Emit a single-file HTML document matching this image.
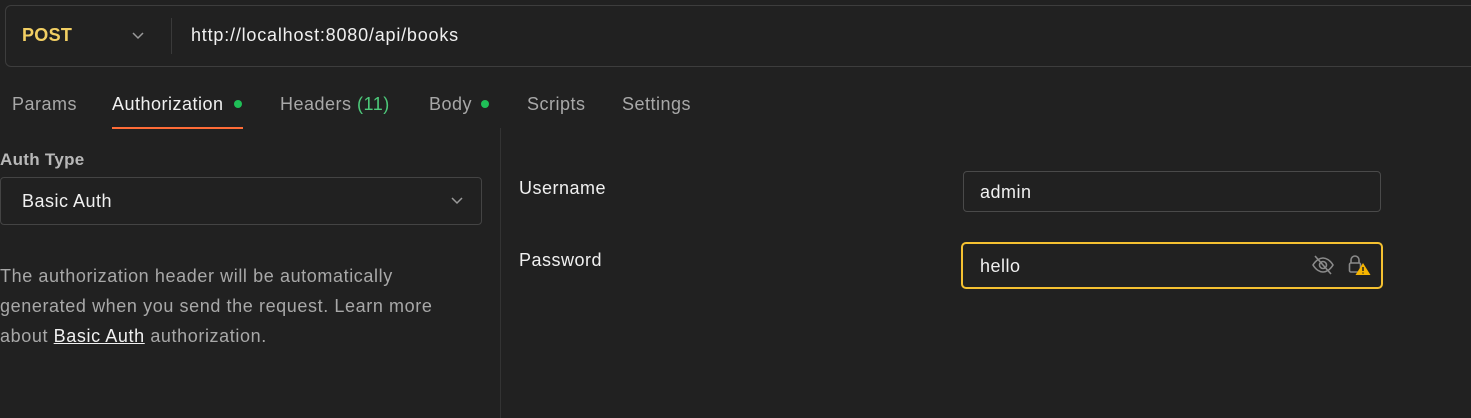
<!DOCTYPE html>
<html><head><style>
*{box-sizing:border-box;margin:0;padding:0}
body{width:1471px;height:414px;background:#212121;font-family:"Liberation Sans",sans-serif;color:#e8e8e8;position:relative;overflow:hidden;font-size:18px;letter-spacing:0.5px}
.a{position:absolute;white-space:nowrap}
</style></head><body>
<div class="a" style="left:5px;top:5px;width:1480px;height:62px;border:1px solid #3d3d3d;border-radius:6px"></div>
<div class="a" style="left:22px;top:25px;font-weight:bold;color:#f2cf63;font-size:18px;letter-spacing:0.3px">POST</div>
<svg class="a" style="left:131px;top:31px" width="14" height="10"><path d="M2 2l5 5 5-5" stroke="#9a9a9a" stroke-width="1.5" fill="none"/></svg>
<div class="a" style="left:171px;top:18px;width:1px;height:36px;background:#3a3a3a"></div>
<div class="a" style="left:191px;top:25px;color:#f0f0f0;letter-spacing:0.8px">http://localhost:8080/api/books</div>

<div class="a" style="left:12px;top:94px;color:#a8a8a8">Params</div>
<div class="a" style="left:112px;top:94px;color:#f0f0f0">Authorization</div>
<div class="a" style="left:234px;top:100px;width:8px;height:8px;border-radius:50%;background:#1fbf57"></div>
<div class="a" style="left:112px;top:127px;width:131px;height:2px;background:#ff6c37"></div>
<div class="a" style="left:280px;top:94px;color:#a8a8a8">Headers <span style="color:#4dc97a">(11)</span></div>
<div class="a" style="left:429px;top:94px;color:#a8a8a8">Body</div>
<div class="a" style="left:481px;top:100px;width:8px;height:8px;border-radius:50%;background:#1fbf57"></div>
<div class="a" style="left:527px;top:94px;color:#a8a8a8">Scripts</div>
<div class="a" style="left:622px;top:94px;color:#a8a8a8">Settings</div>

<div class="a" style="left:500px;top:128px;width:1px;height:290px;background:#333"></div>

<div class="a" style="left:0px;top:150px;font-weight:bold;color:#b8b8b8;font-size:17px;letter-spacing:0.3px">Auth Type</div>
<div class="a" style="left:0px;top:177px;width:482px;height:48px;border:1px solid #444;border-radius:4px"></div>
<div class="a" style="left:22px;top:191px;color:#f0f0f0">Basic Auth</div>
<svg class="a" style="left:450px;top:196px" width="14" height="10"><path d="M2 2l5 5 5-5" stroke="#9a9a9a" stroke-width="1.5" fill="none"/></svg>
<div class="a" style="left:0px;top:261px;width:440px;color:#a8a8a8;line-height:30px;white-space:normal;letter-spacing:0.6px">The authorization header will be automatically generated when you send the request. Learn more about <span style="color:#f0f0f0;text-decoration:underline">Basic Auth</span> authorization.</div>

<div class="a" style="left:519px;top:178px;color:#f0f0f0">Username</div>
<div class="a" style="left:963px;top:171px;width:418px;height:41px;border:1px solid #4a4a4a;border-radius:4px"></div>
<div class="a" style="left:980px;top:182px;color:#f0f0f0">admin</div>
<div class="a" style="left:519px;top:250px;color:#f0f0f0">Password</div>
<div class="a" style="left:961px;top:242px;width:422px;height:47px;border:2px solid #f5c131;border-radius:5px"></div>
<div class="a" style="left:980px;top:256px;color:#f0f0f0">hello</div>
<svg class="a" style="left:1311px;top:254px" width="24" height="22" fill="none" stroke="#8a8a8a" stroke-width="1.6"><path d="M2 11c3-5 7-7 10-7s7 2 10 7c-3 5-7 7-10 7s-7-2-10-7z"/><circle cx="12" cy="11" r="3.5"/><path d="M4 2l16 18"/></svg>
<svg class="a" style="left:1348px;top:253px" width="24" height="24"><path d="M3 10V7a4 4 0 018 0v3" stroke="#8a8a8a" stroke-width="1.6" fill="none"/><rect x="1.5" y="10" width="11" height="9" rx="1.5" stroke="#8a8a8a" stroke-width="1.6" fill="none"/><path d="M15 10l7.5 12h-15z" fill="#f5b400"/><path d="M15 14v4M15 19.5v1" stroke="#212121" stroke-width="1.5"/></svg>
</body></html>
